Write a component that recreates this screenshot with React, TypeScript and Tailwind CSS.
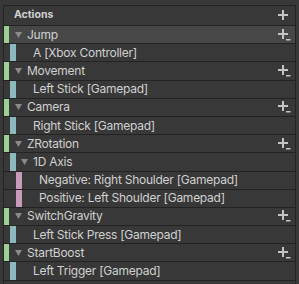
import React from "react";

type Kind = "action" | "binding" | "composite" | "part";
type Row = { kind: Kind; label: string; selected?: boolean };

const rows: Row[] = [
  { kind: "action", label: "Jump", selected: true },
  { kind: "binding", label: "A [Xbox Controller]" },
  { kind: "action", label: "Movement" },
  { kind: "binding", label: "Left Stick [Gamepad]" },
  { kind: "action", label: "Camera" },
  { kind: "binding", label: "Right Stick [Gamepad]" },
  { kind: "action", label: "ZRotation" },
  { kind: "composite", label: "1D Axis" },
  { kind: "part", label: "Negative: Right Shoulder [Gamepad]" },
  { kind: "part", label: "Positive: Left Shoulder [Gamepad]" },
  { kind: "action", label: "SwitchGravity" },
  { kind: "binding", label: "Left Stick Press [Gamepad]" },
  { kind: "action", label: "StartBoost" },
  { kind: "binding", label: "Left Trigger [Gamepad]" },
];

function Triangle() {
  return (
    <svg width="7" height="6" viewBox="0 0 7 6" className="shrink-0">
      <polygon points="0,0 7,0 3.5,6" fill="#8a8a8a" />
    </svg>
  );
}

function Plus({ dash }: { dash?: boolean }) {
  return (
    <svg width="14" height="12" viewBox="0 0 14 12" className="shrink-0">
      <rect x="0" y="4" width="10" height="2" fill="#c4c4c4" />
      <rect x="4" y="0" width="2" height="10" fill="#c4c4c4" />
      {dash && <rect x="8" y="10" width="4.5" height="1.5" fill="#c4c4c4" />}
    </svg>
  );
}

function Label({ text }: { text: string }) {
  return <span className="whitespace-nowrap tracking-[-0.25px]">{text}</span>;
}

function RowView({ row }: { row: Row }) {
  const base =
    "flex items-stretch h-[18.2px] border-b border-[#232323] " +
    (row.selected ? "bg-[#474747]" : "");
  if (row.kind === "action") {
    return (
      <div className={base}>
        <div className="w-[5px] shrink-0 bg-[#9ccf94]" />
        <div className="flex items-center ml-[6px]">
          <Triangle />
        </div>
        <div className="flex items-center ml-[5px] flex-1 min-w-0">
          <Label text={row.label} />
        </div>
        <div className="flex items-center mr-[3px]">
          <Plus dash />
        </div>
      </div>
    );
  }
  if (row.kind === "composite") {
    return (
      <div className={base}>
        <div className="w-[6px] shrink-0 ml-[6px] bg-[#8cb9bd]" />
        <div className="flex items-center ml-[5px]">
          <Triangle />
        </div>
        <div className="flex items-center ml-[5px] flex-1 min-w-0">
          <Label text={row.label} />
        </div>
      </div>
    );
  }
  if (row.kind === "part") {
    return (
      <div className={base}>
        <div className="w-[6px] shrink-0 ml-[12px] bg-[#c99bbb]" />
        <div className="flex items-center ml-[17px] flex-1 min-w-0">
          <Label text={row.label} />
        </div>
      </div>
    );
  }
  return (
    <div className={base}>
      <div className="w-[6px] shrink-0 ml-[6px] bg-[#8cb9bd]" />
      <div className="flex items-center ml-[17px] flex-1 min-w-0">
        <Label text={row.label} />
      </div>
    </div>
  );
}

export default function App() {
  return (
    <div
      className="w-[299px] h-[284px] bg-[#383838] overflow-hidden pt-[5px] pl-[3px] pr-[3px] text-[#d0d0d0] text-[12px] leading-none"
      style={{ fontFamily: "Inter, 'Noto Sans', sans-serif" }}
    >
      <div className="border-t border-l border-r border-[#232323] h-full">
        <div className="flex items-center h-[20px] border-b border-[#232323] pl-[10px]">
          <span className="font-bold text-[10.5px] flex-1">Actions</span>
          <div className="mr-[3px] flex items-center">
            <Plus />
          </div>
        </div>
        {rows.map((r, i) => (
          <RowView key={i} row={r} />
        ))}
      </div>
    </div>
  );
}
